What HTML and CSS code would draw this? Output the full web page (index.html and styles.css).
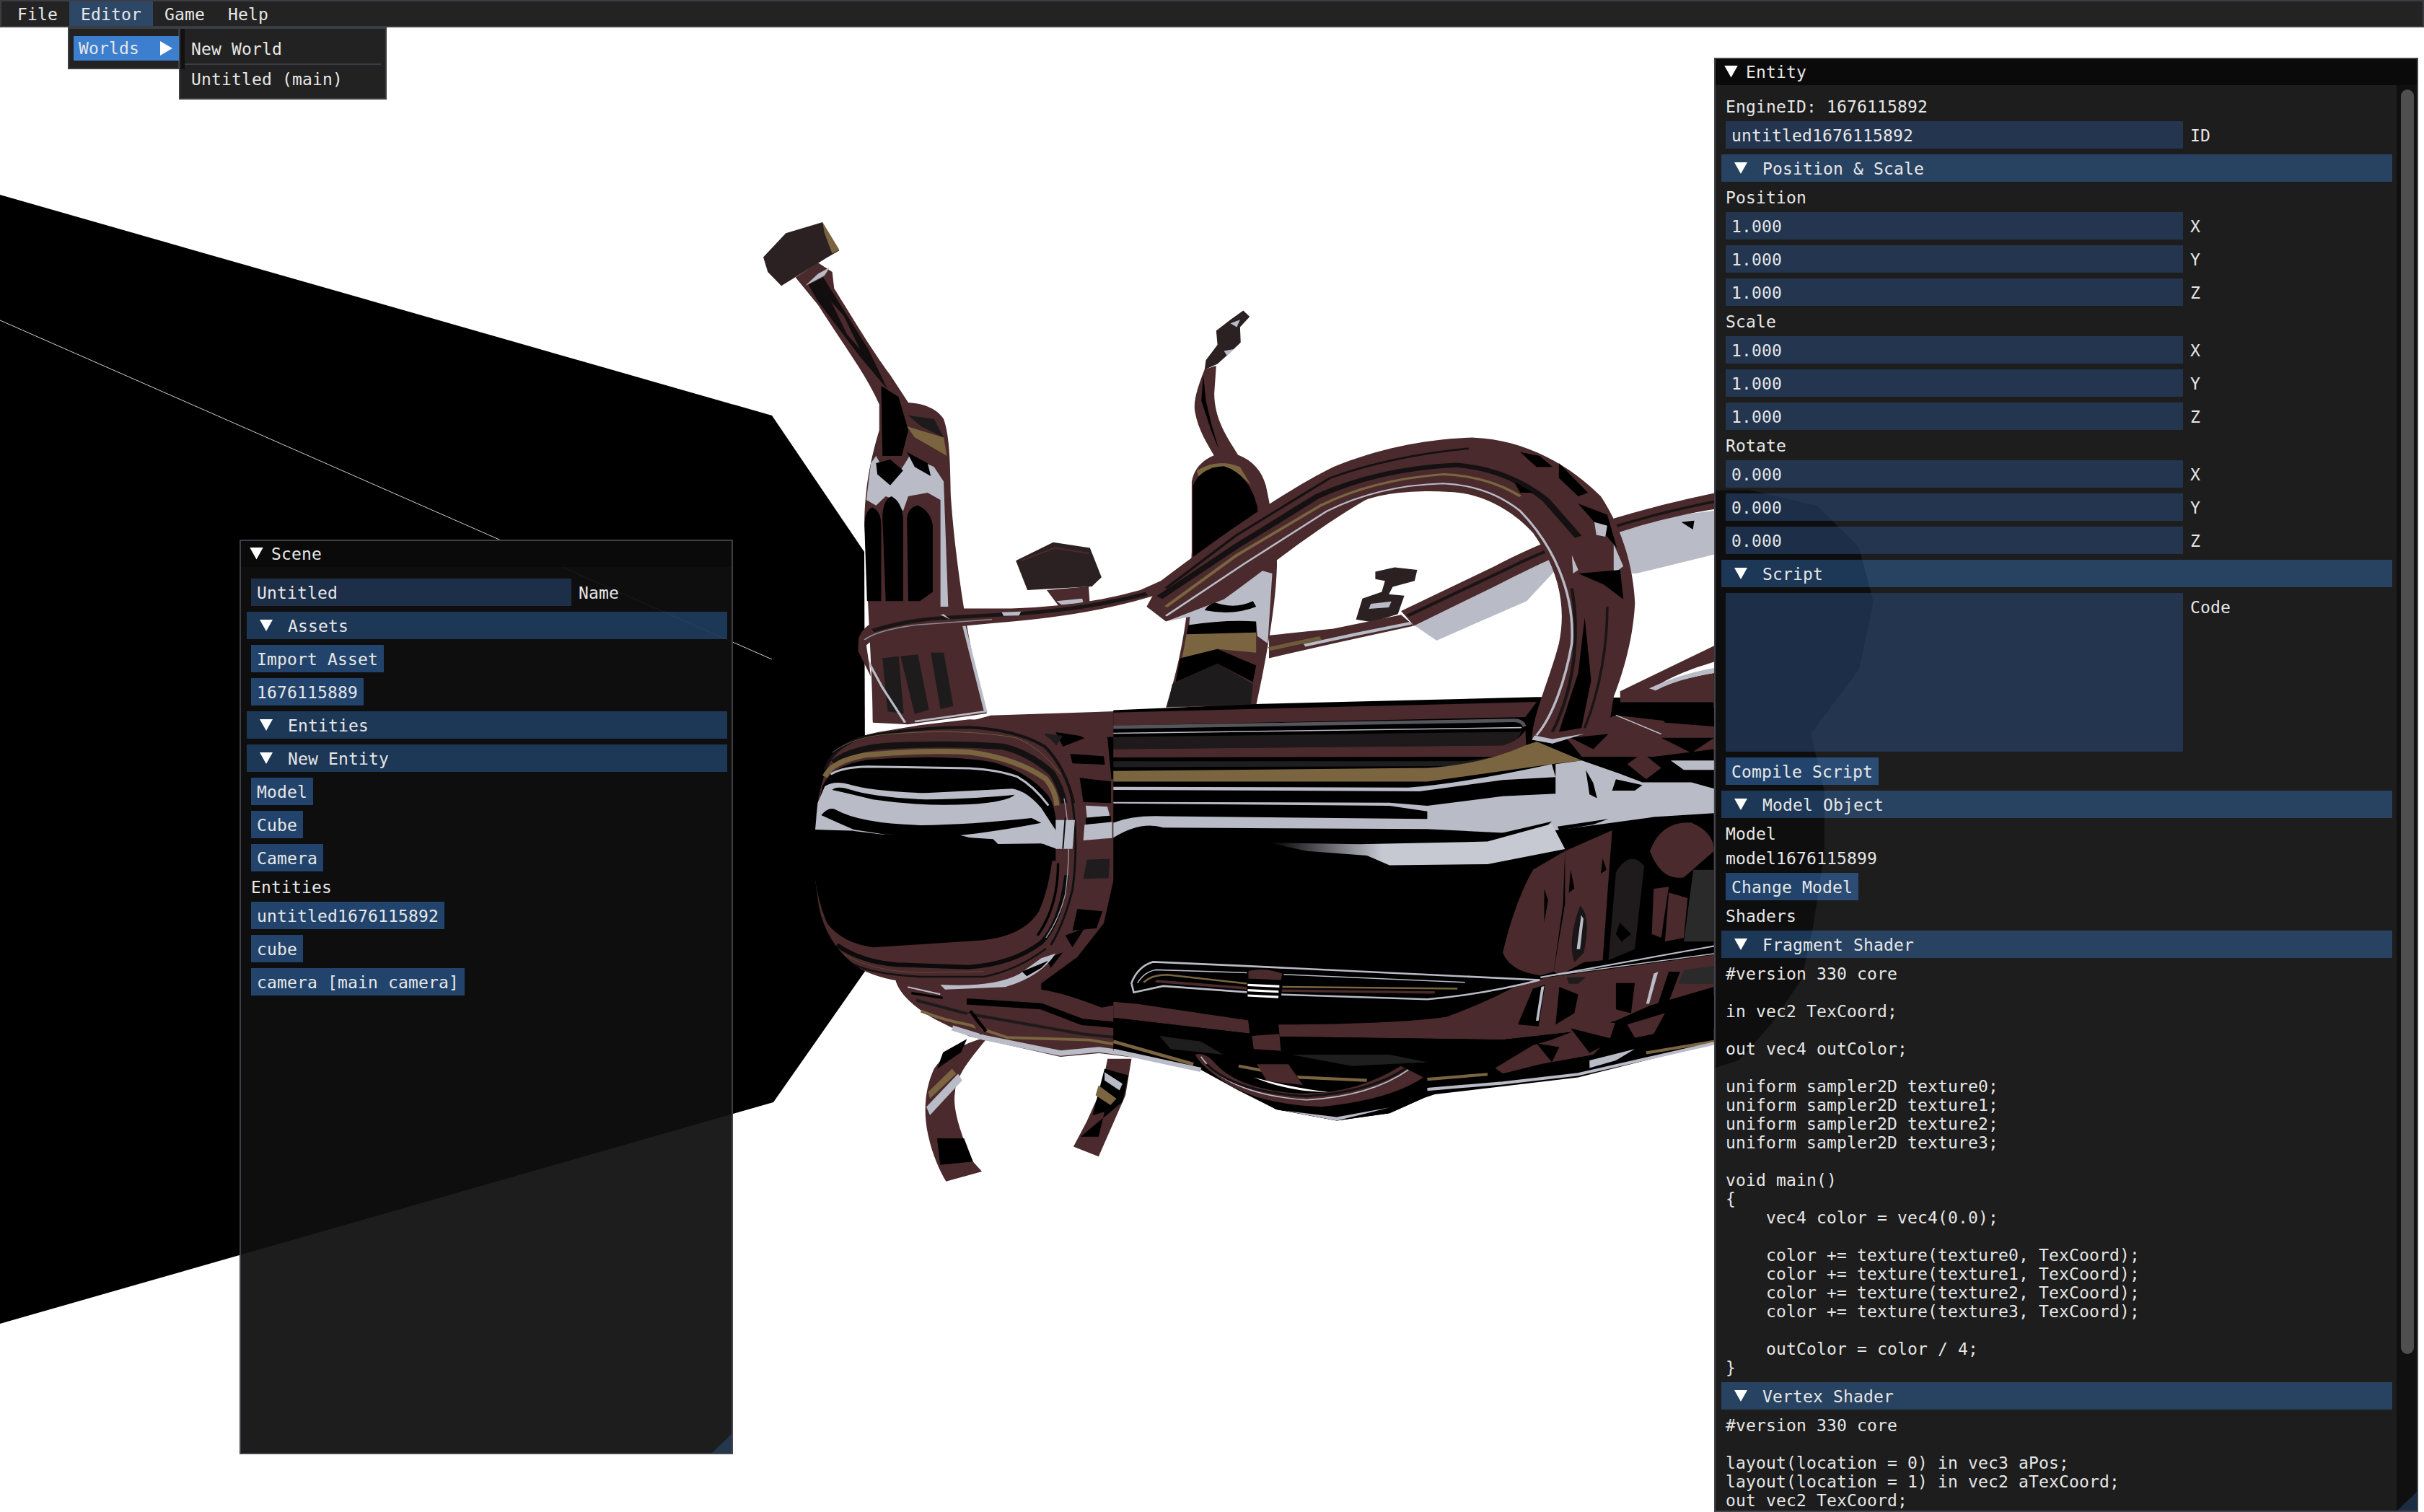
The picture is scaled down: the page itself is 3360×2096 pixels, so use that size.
FILE: index.html
```html
<!DOCTYPE html>
<html lang="en">
<head>
<meta charset="utf-8">
<title>Editor</title>
<link rel="stylesheet" href="styles.css">
</head>
<body>
<div class="viewport">
  <svg class="world" width="3360" height="2096" viewBox="0 0 3360 2096" xmlns="http://www.w3.org/2000/svg">
    <defs>
      <linearGradient id="fade-b" gradientUnits="userSpaceOnUse" x1="380" y1="0" x2="680" y2="0">
        <stop offset="0" stop-color="#b9bbc6" stop-opacity="0"/>
        <stop offset="1" stop-color="#c6c8d2"/>
      </linearGradient>
    </defs>
    <polygon fill="#000" points="0,270 1070,576 1198,765 1200,1345 1072,1528 0,1835"/>
    <line x1="0" y1="444" x2="1070" y2="914" stroke="#cfcfcf" stroke-width="1"/>

    <!-- arms and loose parts -->
    <g transform="translate(1000 280) scale(.893 .51)">
      <!-- left arm -->
      <path fill="#4a2a2c" d="M115,205 L150,165 L172,190 L175,235 C205,320 240,420 262,470 L290,545 Q330,550 345,590 C355,640 355,720 356,800 C362,950 380,1200 412,1390 L290,1420 L235,1415 C235,1300 228,1150 222,860 C224,750 235,680 245,620 L245,550 C225,470 190,390 150,280 Z"/>
      <path fill="#120d0e" d="M135,225 L158,205 L228,400 L258,510 L215,420 L150,270 Z"/>
      <path fill="#4a2a2c" d="M170,270 L190,310 L215,400 L195,360 Z"/>
      <path fill="#b9bbc6" d="M150,195 L168,178 L160,200 L130,228 Z"/>
      <path fill="#000" d="M248,500 L275,530 L290,620 L280,690 L250,690 Z"/>
      <path fill="#1c1a1a" d="M290,580 L330,590 L345,640 L310,610 Z"/>
      <path fill="#7a6540" d="M288,610 L345,640 L350,690 L300,640 Z"/>
      <path fill="#b9bbc6" d="M225,810 L232,710 L240,690 L248,715 L262,705 L278,730 L292,690 L330,720 L345,760 L352,1100 L340,1100 L340,810 L320,790 L290,800 L282,840 L270,810 L255,800 L240,825 Z"/>
      <path fill="#000" d="M222,880 Q222,840 234,830 Q248,840 248,880 L248,1085 L226,1085 Z"/>
      <path fill="#000" d="M250,860 Q250,810 264,800 Q280,815 282,860 L282,1085 L255,1085 Z"/>
      <path fill="#000" d="M288,860 Q290,830 305,825 Q325,840 328,880 L328,1060 L308,1085 L290,1085 Z"/>
      <path fill="#000" d="M240,710 L262,700 L282,730 L262,770 L242,740 Z"/>
      <path fill="#000" d="M288,680 L320,710 L325,745 L300,720 Z"/>
      <path fill="#1d1b1b" d="M250,1240 L275,1235 L283,1390 L258,1385 Z"/>
      <path fill="#1d1b1b" d="M278,1235 L305,1230 L322,1380 L300,1392 Z"/>
      <path fill="#1d1b1b" d="M325,1225 L345,1225 L360,1370 L340,1378 Z"/>
      <path fill="none" stroke="#b9bbc6" stroke-width="5" d="M372,1120 L410,1385 L300,1412"/>
      <path fill="none" stroke="#b9bbc6" stroke-width="4" d="M225,1240 L250,1320 L285,1415"/>

      <!-- hammer head -->
      <path fill="#2b2022" d="M65,150 L100,85 L157,55 L168,120 L183,132 L165,150 L93,228 L72,190 Z"/>
      <path fill="#7a6540" d="M157,55 L183,130 L172,140 L160,85 Z"/>

      <!-- centre arm -->
      <path fill="#2b2022" d="M810,295 L820,312 L805,340 L806,382 L788,412 L770,440 L750,456 L752,430 L770,388 L768,350 L790,320 Z"/>
      <path fill="#b9bbc6" d="M790,330 L805,320 L800,340 Z M780,405 L795,400 L785,418 Z"/>
      <path fill="#4a2a2c" d="M750,455 C740,500 732,540 735,570 C740,620 755,660 765,690 L803,690 C785,640 765,590 765,520 L768,445 Z"/>
      <path fill="#000" d="M748,470 L745,540 L760,620 L772,672 L760,600 L752,540 Z"/>
      <path fill="#4a2a2c" d="M765,688 L803,688 Q835,710 845,770 C855,850 864,950 862,1000 C860,1100 845,1250 830,1368 L690,1374 C710,1260 725,1150 730,950 L730,760 Q735,710 765,688 Z"/>
      <path fill="#7a6540" d="M738,730 Q770,695 805,720 L822,770 Q790,710 740,745 Z"/>
      <path fill="#000" d="M732,770 Q745,720 780,718 Q820,740 832,830 L835,1000 L732,1000 Z"/>
      <path fill="#b9bbc6" d="M735,1000 L835,1000 L855,1010 L848,1200 L832,1180 L830,1145 L760,1150 L725,1165 Z"/>
      <path fill="#000" d="M760,1085 Q795,1110 825,1085 L830,1100 Q795,1125 750,1110 Z M725,1150 Q780,1135 830,1140 L830,1170 L770,1175 L722,1175 Z"/>
      <path fill="#7a6540" d="M722,1175 L830,1170 L830,1225 L770,1215 L715,1240 Z"/>
      <path fill="#000" d="M712,1240 L770,1215 L830,1260 L825,1305 L770,1255 L705,1305 Z"/>
      <path fill="#1d1b1b" d="M700,1310 L770,1255 L825,1310 L822,1365 L692,1372 Z"/>

      <!-- small block -->
      <path fill="#4a2a2c" d="M505,1055 L570,1045 L572,1098 L525,1102 Z"/>
      <path fill="#b9bbc6" d="M520,1085 L560,1078 L562,1090 L528,1095 Z"/>
      <path fill="#2b2022" d="M457,975 L515,925 L572,940 L590,1020 L575,1045 L475,1055 Z"/>
      <path fill="none" stroke="#4a2a2c" stroke-width="4" d="M465,975 L518,940 L570,955"/>

      <!-- small I piece -->
      <path fill="#2b2022" d="M1015,1005 L1045,993 L1080,1000 L1076,1030 L1042,1046 L1036,1066 L1060,1070 L1050,1120 L1010,1142 L985,1135 L995,1078 L1025,1060 L1030,1030 L1015,1025 Z"/>
      <path fill="#b9bbc6" d="M1008,1092 L1040,1086 L1036,1102 L1005,1106 Z"/>
    </g>

    <!-- legs -->
    <g transform="translate(1100 940) scale(.829 .459)">
      <path fill="#4a2a2c" d="M325,1085 C280,1100 245,1150 235,1180 C222,1230 215,1300 225,1380 C232,1440 245,1490 255,1520 L315,1490 L300,1460 C280,1380 265,1300 270,1250 C272,1210 285,1170 325,1085 Z"/>
      <path fill="#000" d="M240,1390 L285,1390 L300,1460 L245,1470 Z M250,1130 L290,1090 L280,1130 L240,1180 Z"/>
      <path fill="#b9bbc6" d="M222,1295 L275,1195 L282,1215 L228,1320 Z"/>
      <path fill="#7a6540" d="M225,1250 L265,1180 L272,1195 L228,1270 Z"/>
      <path fill="#4a2a2c" d="M525,1150 L565,1150 L555,1260 L510,1445 L468,1415 L490,1340 L515,1240 Z"/>
      <path fill="#000" d="M520,1180 L560,1200 L550,1280 L510,1340 L480,1385 L510,1385 L520,1310 L500,1320 Z"/>
      <path fill="#b9bbc6" d="M520,1190 L550,1225 L545,1245 L520,1215 Z"/>
      <path fill="#7a6540" d="M510,1230 L540,1270 L530,1290 L505,1260 Z"/>
    </g>

    <!-- nacelle -->
    <g transform="translate(1110 980) scale(.3333)">
      <!-- hull behind -->
      <path fill="#4a2a2c" d="M395,1140 Q420,1220 560,1300 L700,1370 L1080,1455 L1240,1440 L1560,1480 L1560,10 L790,35 L700,60 Z"/>
      <path fill="#000" d="M1000,1150 L1300,700 L1560,650 L1560,1250 L1360,1230 L1250,1250 Q1100,1190 1000,1175 Z"/>
      <path fill="none" stroke="#000" stroke-width="26" d="M690,1225 L1000,1245 L1170,1310 L1560,1345"/>
      <path fill="none" stroke="#1e1a1b" stroke-width="12" d="M480,1220 L690,1275 L1170,1360 L1560,1400"/>
      <path fill="none" stroke="#b9bbc6" stroke-width="22" d="M630,1335 L760,1375 L1080,1440 L1240,1425 L1560,1470"/>
      <path fill="none" stroke="#7a6540" stroke-width="12" d="M500,1265 Q600,1305 700,1322 L860,1375 L1200,1385 L1560,1445"/>
      <path fill="none" stroke="#000" stroke-width="10" d="M460,1190 L590,1210"/>
      <path fill="none" stroke="#b9bbc6" stroke-width="6" d="M445,1165 L580,1195"/>
      <path fill="none" stroke="#000" stroke-width="14" d="M705,1265 L770,1350"/>
      <path fill="none" stroke="#4a2a2c" stroke-width="16" d="M695,1275 L755,1360"/>

      <!-- outer collar -->
      <path fill="#4a2a2c" d="M1030,95 L1200,80 L1290,125 L1305,700 L1260,900 L1150,1040 L1000,1150 Z"/>
      <path fill="#000" d="M1120,195 L1260,205 L1265,240 L1130,235 Z M1160,295 L1290,310 L1290,400 L1175,395 Z M1060,105 L1160,120 L1180,130 L1090,165 Z"/>
      <path fill="#1f1c1d" d="M1015,110 L1090,120 L1060,165 L1020,135 Z"/>
      <path fill="#b9bbc6" d="M1185,410 L1275,415 L1285,452 L1190,460 Z"/>
      <path fill="#000" d="M1185,462 L1290,452 L1290,480 L1185,490 Z"/>
      <path fill="#b9bbc6" d="M1180,490 L1295,478 L1295,545 L1175,555 Z"/>
      <path fill="#1f1c1d" d="M1190,635 L1285,632 L1280,712 L1175,715 Z"/>
      <path fill="#000" d="M1150,840 L1255,850 L1230,920 L1130,930 Z M1100,950 L1180,920 L1130,1000 Z M1020,1050 L1090,1020 L1040,1085 Z"/>
      <path fill="#000" d="M1275,125 L1300,125 L1310,300 L1292,300 Z"/>

      <!-- nacelle ring -->
      <path fill="#4a2a2c" d="M60,500 Q70,320 130,210 Q190,130 320,105 L500,75 L700,52 Q900,55 1020,120 Q1090,170 1140,300 Q1180,500 1160,700 Q1130,920 1010,1040 Q920,1130 760,1160 L500,1150 Q340,1140 250,1090 Q110,1000 75,830 L60,720 Z"/>
      <path fill="none" stroke="#141112" stroke-width="12" d="M100,260 Q150,135 320,115 Q500,85 700,85 Q900,95 1015,165 Q1100,250 1135,400"/>
      <path fill="none" stroke="#141112" stroke-width="26" d="M135,232 Q220,165 400,160 Q650,150 840,165 Q950,190 1045,275 Q1085,340 1095,400"/>
      <path fill="none" stroke="#6a5a3e" stroke-width="3" d="M130,190 Q220,120 400,110 Q700,90 900,130 Q1000,170 1080,280"/>
      <path fill="#000" d="M90,330 Q130,240 280,220 Q600,195 800,230 Q950,270 1030,370 Q1075,440 1060,600 L60,570 L60,480 Z"/>
      <path fill="none" stroke="#7a6540" stroke-width="22" d="M100,290 Q130,225 270,200 Q500,178 700,188 Q900,215 1020,300 Q1060,350 1065,410"/>
      <path fill="none" stroke="#b9bbc6" stroke-width="9" d="M125,280 Q170,250 280,248 L700,255 Q820,262 900,290 Q970,330 1030,410"/>

      <path fill="#b9bbc6" d="M60,510 L70,400 L100,330 Q140,305 200,322 Q300,352 520,358 L880,340 Q940,350 1000,420 L1065,520 L1065,590 L1000,568 L820,570 L800,550 L650,540 L340,545 L220,530 L220,515 Z"/>
      <path fill="#000" d="M130,345 Q150,325 210,345 Q300,375 520,385 Q750,380 890,365 Q860,395 700,405 Q500,415 300,385 Q200,360 130,345 Z"/>
      <path fill="#000" d="M85,450 Q120,410 150,430 Q250,485 500,492 Q700,490 960,462 L1000,482 Q800,520 650,535 L350,530 L220,510 Q150,480 85,450 Z"/>
      <path fill="#000" d="M340,530 L650,530 L810,570 L1010,570 L1060,600 L1060,640 L60,640 L60,515 L215,515 Z"/>

      <!-- black window -->
      <path fill="#000" d="M60,560 L1020,575 L1050,600 Q1035,750 990,850 Q930,950 760,970 L300,1000 Q170,980 110,900 Q75,820 60,720 Z"/>

      <!-- lower rim -->
      <path fill="none" stroke="#0c0a0a" stroke-width="18" d="M150,990 Q250,1060 400,1072 L700,1082 Q880,1070 1000,980 Q1080,900 1105,700"/>
      <path fill="none" stroke="#141112" stroke-width="8" d="M220,1070 Q300,1112 500,1122 L760,1122 Q900,1095 1020,1005"/>
      <path fill="none" stroke="#6a5a3e" stroke-width="2" d="M180,1030 Q300,1100 500,1105 L760,1100"/>
      <path fill="none" stroke="#000" stroke-width="10" d="M1070,650 Q1070,830 985,950"/>
      <path fill="none" stroke="#9a9aa4" stroke-width="4" d="M1095,380 Q1130,560 1100,780 Q1075,880 1020,960"/>
      <path fill="none" stroke="#111" stroke-width="9" d="M1120,340 Q1160,540 1130,760 Q1095,900 1040,990"/>
      <path fill="#b9bbc6" d="M1060,470 L1140,470 L1130,590 L1060,590 Z"/>
      <path fill="none" stroke="#111" stroke-width="6" d="M1100,460 L1090,590"/>
      <path fill="#b9bbc6" d="M580,1155 Q800,1168 910,1110 L1000,1045 L1060,1025 Q1000,1120 850,1165 L600,1175 Z"/>
      <path fill="#000" d="M920,1100 L1030,1055 L1000,1085 L940,1120 Z"/>
    </g>

    <!-- hull side -->
    <g transform="translate(1560 960) scale(.523)">
      <path fill="#000" d="M-32,47 L360,30 L1090,12 L1560,15 L1560,930 L1200,1020 L820,1065 L790,1075 L700,1115 L560,1135 L400,1105 L300,1055 L200,1000 L-32,955 Z"/>
      <!-- upper stripes -->
      <path fill="#4a2a2c" d="M-32,53 L1090,25 L1060,65 L-32,88 Z"/>
      <path fill="none" stroke="#55555d" stroke-width="9" d="M-32,92 L1030,74 Q1052,74 1058,90"/>
      <path fill="none" stroke="#b9bbc6" stroke-width="3" d="M-32,108 L1050,93"/>
      <path fill="#1e1a1b" d="M-32,118 L1050,104 Q1040,130 1000,140 L-32,150 Z"/>
      <path fill="#4a2a2c" d="M-32,150 L1000,140 Q1040,130 1060,100 L1062,140 L1000,170 L-32,172 Z"/>
      <path fill="#1e1e1e" d="M-32,182 L900,182 L1000,168 L900,195 L-32,198 Z"/>
      <path fill="#7a6540" d="M-32,208 L800,200 Q950,190 1060,140 L1090,130 L1210,180 L1130,190 L800,236 L-32,236 Z"/>

      <!-- big reflection -->
      <path fill="#b9bbc6" d="M-32,250 L750,252 Q900,240 1130,190 L1140,224 L1000,232 L780,262 L-32,258 Z"/>
      <path fill="#b9bbc6" d="M800,300 L1000,275 L1140,268 L1140,190 L1210,180 L1310,215 L1370,238 L1500,238 L1560,255 L1560,320 L1400,330 L1290,345 L1140,365 L1000,372 L800,362 L400,360 L100,358 Q40,340 -32,385 L-32,345 Q20,325 100,328 L800,335 L800,315 L700,300 L-32,294 L-32,290 L700,292 Z"/>
      <path fill="#000" d="M1220,205 L1240,240 L1250,280 L1230,270 Z M1300,230 L1370,245 L1350,260 L1290,260 Z M1145,355 L1280,335 L1240,350 L1150,365 Z"/>
      <path fill="#000" d="M1000,372 L1130,342 L1100,370 L960,402 L900,402 Z"/>
      <path fill="url(#fade-b)" d="M380,398 L620,402 L960,395 L1130,348 L1165,415 L960,455 L700,458 L640,432 L480,420 Z"/>

      <!-- right quarter -->
      <path fill="#4a2a2c" d="M1000,690 Q1030,560 1080,470 L1165,420 L1160,560 L1135,740 L1100,750 Q1020,740 1000,690 Z"/>
      <path fill="#4a2a2c" d="M1165,420 L1290,365 L1280,500 L1265,710 L1215,715 L1150,750 L1135,740 L1165,560 Z"/>
      <path fill="#000" d="M1110,520 L1120,550 L1110,610 Z M1180,470 L1190,520 L1175,530 Z M1265,440 L1275,470 L1260,480 Z"/>
      <path fill="#1a1618" d="M1205,565 Q1235,590 1215,690 L1190,715 Q1170,660 1205,565 Z"/>
      <path fill="#b9bbc6" d="M1208,590 L1214,600 L1205,680 L1196,680 Z"/>
      <path fill="#1f1a1b" d="M1300,475 Q1340,415 1375,460 L1350,680 L1280,710 Z"/>
      <path fill="#000" d="M1310,610 L1340,640 L1315,660 L1300,640 Z"/>
      <path fill="#4a2a2c" d="M1390,420 Q1420,340 1500,345 Q1560,370 1560,420 L1480,490 Q1420,500 1390,420 Z"/>
      <path fill="#4a2a2c" d="M1400,520 L1440,515 L1420,650 L1395,640 Z M1440,530 L1490,545 L1480,650 L1430,660 Z"/>
      <path fill="#2a2a2a" d="M1505,470 L1560,470 L1560,660 L1480,660 Z"/>

      <!-- rear top detail -->
      <path fill="#4a2a2c" d="M1160,110 L1300,60 L1560,90 L1560,150 L1400,170 L1210,170 Z"/>
      <path fill="#4a2a2c" d="M1330,190 L1370,160 L1420,200 L1380,230 Z"/>
      <path fill="#000" d="M1180,120 L1280,110 L1240,150 Z M1400,40 L1560,40 L1560,90 L1430,80 Z M1420,120 L1560,120 L1500,160 Z"/>
      <path fill="#b9bbc6" d="M1445,180 L1560,180 L1560,205 L1480,205 Z"/>
      <path fill="none" stroke="#b9bbc6" stroke-width="3" d="M1300,60 L1420,110"/>

      <!-- lower band -->
      <path fill="#4a2a2c" d="M-32,820 L30,825 L400,880 Q700,880 850,860 Q960,820 1050,770 L1120,755 L1560,695 L1560,780 L1390,830 L1300,870 L1180,900 L1000,920 L400,912 L-32,862 Z"/>
      <path fill="none" stroke="#b9bbc6" stroke-width="4" d="M1100,755 L1560,672"/>
      <path fill="none" stroke="#b9bbc6" stroke-width="3" d="M1130,750 L1560,692"/>
      <path fill="#000" d="M1040,880 L1080,785 L1112,775 L1095,885 Z M1140,880 L1190,850 L1200,800 L1150,780 Z M1300,770 L1350,770 L1340,850 L1300,840 Z M1440,740 L1470,740 L1440,820 L1410,830 Z"/>
      <path fill="#b9bbc6" d="M1102,780 L1110,778 L1095,870 L1088,870 Z M1400,745 L1412,740 L1388,825 L1380,825 Z"/>
      <path fill="#2a2a2a" d="M1480,735 L1560,725 L1560,772 L1465,772 Z"/>
      <path fill="#1f1c1d" d="M1170,755 L1220,755 L1200,772 L1175,772 Z"/>

      <!-- trim strip -->
      <path fill="#000" d="M20,795 L14,770 Q30,725 70,712 L300,722 L1100,762 Q950,800 800,815 L400,802 L100,778 Z"/>
      <path fill="none" stroke="#b9bbc6" stroke-width="5" d="M22,795 L16,770 Q32,727 72,714 L300,724 L1098,762 Q950,800 800,813 L400,800 L100,778 Z"/>
      <path fill="none" stroke="#b9bbc6" stroke-width="3" d="M32,770 Q50,740 80,735 L300,742 L900,768"/>
      <path fill="none" stroke="#7a6540" stroke-width="5" d="M48,768 Q70,748 110,748 L400,780 L880,785"/>
      <path fill="none" stroke="#4a2a2c" stroke-width="7" d="M80,765 L400,790 L820,795"/>

      <!-- lower hull -->
      <path fill="#000" d="M-32,862 L400,912 L1000,920 L1180,900 L1000,1000 L800,1040 L400,1000 L200,940 Z"/>
      <path fill="#1e1e1e" d="M90,910 L200,925 L260,960 L120,945 Z M440,960 L700,960 L800,980 L600,990 Z"/>
      <path fill="#4a2a2c" d="M980,995 L1080,935 L1130,920 L1260,870 L1320,880 L1240,960 L1100,985 L1000,1010 Z"/>
      <path fill="#000" d="M1090,930 L1150,940 L1130,980 Z M1180,890 L1300,920 L1230,955 Z M1300,870 L1560,800 L1560,890 L1370,945 L1280,930 Z"/>
      <path fill="#4a2a2c" d="M1330,880 L1430,850 L1400,905 L1350,915 Z"/>
      <path fill="#b9bbc6" d="M1230,975 L1350,945 L1300,975 L1230,995 Z"/>
      <path fill="none" stroke="#7a6540" stroke-width="9" d="M-32,925 L180,985"/>
      <path fill="none" stroke="#b9bbc6" stroke-width="12" d="M-32,950 L200,1000"/>
      <path fill="none" stroke="#7a6540" stroke-width="8" d="M300,990 L460,1020 L640,1028 M800,1025 L960,1012 M1380,955 L1560,925"/>
      <path fill="none" stroke="#b9bbc6" stroke-width="8" d="M800,1052 L1000,1035 L1200,1012 L1560,930"/>

      <!-- strap -->
      <path fill="#000" d="M322,738 Q370,728 420,745 L405,870 L412,950 L470,1040 L375,1030 L335,950 L322,840 Z"/>
      <path fill="#4a2a2c" d="M326,738 Q370,728 416,745 L412,762 L326,758 Z"/>
      <path fill="#4a2a2c" d="M335,910 L408,905 L412,950 L340,945 Z M348,985 L432,985 L470,1040 L375,1030 Z"/>
      <path fill="#fff" d="M324,772 L408,776 L408,782 L324,778 Z M324,786 L406,790 L406,796 L324,792 Z M324,800 L406,804 L405,810 L324,806 Z"/>

      <!-- handle -->
      <path fill="#fff" d="M340,1020 Q450,1050 560,1062 L470,1055 Q400,1045 340,1020 Z"/>
      <path fill="#000" d="M280,1040 Q400,1100 560,1100 L700,1080 L800,1050 L790,1075 L700,1115 L560,1135 L400,1105 Z"/>
      <path fill="#4a2a2c" d="M185,960 Q210,950 240,985 Q300,1050 450,1062 Q600,1070 730,990 L790,1020 Q700,1080 520,1098 Q350,1092 260,1030 Q200,990 185,960 Z"/>
      <path fill="none" stroke="#b9bbc6" stroke-width="3" d="M200,965 Q270,1065 480,1080 Q650,1070 750,1000"/>
      <path fill="none" stroke="#151011" stroke-width="6" d="M215,985 Q290,1060 480,1070 Q650,1060 745,995"/>
      <path fill="#b9bbc6" d="M420,1108 L560,1125 L700,1100 L640,1115 L560,1135 Z"/>
    </g>

    <!-- ribbon and arches, in front of the hull -->
    <g transform="translate(1000 280) scale(.893 .51)">
      <!-- far right arch -->
      <path fill="#b9bbc6" d="M1075,1150 L1110,1192 L1250,1085 L1295,1000 L1420,1010 L1560,950 L1560,835 L1400,870 L1290,960 L1200,1040 Z"/>
      <path fill="#4a2a2c" d="M1055,1112 L1200,990 C1280,915 1400,840 1560,785 L1560,830 C1400,870 1290,965 1200,1045 L1075,1152 Z"/>
      <path fill="none" stroke="#1a1415" stroke-width="7" d="M1065,1125 L1210,1005 C1290,935 1400,860 1560,808"/>
      <path fill="#4a2a2c" d="M850,1178 L950,1160 L1055,1122 L1075,1152 L950,1200 L850,1240 Z"/>
      <path fill="none" stroke="#b9bbc6" stroke-width="8" d="M905,1205 L985,1175 L1070,1145"/>
      <path fill="none" stroke="#6e5b3a" stroke-width="10" d="M850,1215 L930,1185"/>
      <path fill="#000" d="M1490,870 L1510,866 L1508,890 Z"/>
      <path fill="#4a2a2c" d="M1395,1330 L1560,1190 L1560,1360 L1395,1360 Z"/>
      <path fill="#fff" d="M1445,1325 C1480,1300 1520,1285 1560,1275 L1560,1240 C1510,1265 1470,1290 1445,1325 Z"/>
      <path fill="#b9bbc6" d="M1440,1322 C1480,1290 1520,1270 1560,1262 L1560,1275 C1520,1285 1480,1300 1450,1328 Z"/>

      <!-- ribbon -->
      <path fill="#4a2a2c" d="M213,1185 Q222,1145 250,1135 L350,1105 L450,1105 Q560,1100 650,1055 L682,1030 L690,1060 Q580,1125 420,1145 L300,1165 Q240,1175 225,1205 L232,1290 L212,1220 Z"/>
      <path fill="none" stroke="#1a1415" stroke-width="10" d="M235,1165 Q290,1135 350,1130 L470,1118 Q570,1105 660,1065"/>
      <path fill="#b9bbc6" d="M340,1122 L355,1135 L345,1120 Z M435,1115 L465,1113 L462,1124 L438,1125 Z"/>
      <path fill="none" stroke="#8a8a92" stroke-width="3" d="M222,1190 Q240,1165 300,1150 L420,1135"/>

      <!-- main arch -->
      <path fill="#b9bbc6" d="M1010,800 C950,860 860,960 770,1075 L690,1140 L735,1125 L800,1040 L850,960 L960,850 Z"/>
      <path fill="#4a2a2c" d="M660,1100 L682,1030 C780,900 880,780 950,720 C1020,670 1090,645 1165,640 C1250,645 1320,720 1365,800 C1395,880 1415,980 1418,1090 C1415,1200 1395,1300 1385,1345 L1380,1400 L1340,1445 L1290,1472 L1258,1462 C1258,1400 1285,1300 1300,1200 C1312,1100 1300,1000 1260,900 C1230,840 1180,790 1130,788 C1080,783 1030,790 1000,810 C930,880 850,990 780,1080 L690,1140 Z"/>
      <path fill="none" stroke="#7a6540" stroke-width="6" d="M690,1100 L800,960 L930,825 Q1010,755 1120,740 Q1190,745 1240,800"/>
      <path fill="none" stroke="#151011" stroke-width="12" d="M680,1075 L800,935 L925,800 Q1020,725 1140,715 Q1220,725 1280,810 L1330,910"/>
      <path fill="none" stroke="#151011" stroke-width="5" d="M690,1050 L800,905 L945,750 Q1040,690 1160,670"/>
      <path fill="none" stroke="#b9bbc6" stroke-width="4" d="M690,1125 L810,985 L940,840 Q1020,770 1120,765 Q1190,770 1240,840 C1290,930 1325,1060 1320,1200 C1310,1300 1290,1400 1265,1450"/>
      <path fill="#000" d="M1240,680 L1270,690 L1290,720 L1265,720 Z M1300,710 L1345,790 L1330,800 L1300,750 Z M1230,760 L1260,790 L1240,790 Z M1330,820 L1375,850 L1390,940 L1355,870 Z"/>
      <path fill="#b9bbc6" d="M1355,870 L1375,880 L1372,910 L1358,905 Z M1320,960 L1330,1000 L1322,1010 Z M1385,930 L1400,990 L1385,1010 Z"/>
      <path fill="#000" d="M1330,1010 L1395,1000 L1400,1080 L1370,1040 Z M1340,1130 L1350,1300 L1335,1430 L1300,1440 L1330,1280 Z"/>
      <path fill="none" stroke="#1a1415" stroke-width="5" d="M1320,1050 C1330,1150 1330,1300 1290,1440"/>
      <path fill="none" stroke="#1a1415" stroke-width="4" d="M1375,1100 C1375,1200 1365,1320 1340,1430"/>
      <path fill="#b9bbc6" d="M1258,1462 L1290,1472 L1340,1445 L1290,1460 L1262,1450 Z"/>
    </g>

    <!-- hull seen through the right panel -->
    <path fill="#000" d="M2378,680 L2424,679 L2519,701 L2577,759 L2596,831 L2595,844 L2577,928 L2510,1017 L2529,1097 L2529,1181 L2513,1286 L2497,1358 L2455,1420 L2410,1470 L2378,1480 Z"/>
  </svg>

  <nav class="menubar">
    <span class="menu-item">File</span>
    <span class="menu-item menu-item-open">Editor</span>
    <span class="menu-item">Game</span>
    <span class="menu-item">Help</span>
  </nav>

  <div class="popup popup-editor">
    <div class="popup-row"><span>Worlds</span><i class="arrow-right"></i></div>
  </div>
  <div class="popup popup-worlds">
    <i class="popup-overlap"></i>
    <span class="popup-text">New World</span>
    <i class="popup-sep"></i>
    <span class="popup-text">Untitled (main)</span>
  </div>

  <section class="window window-scene">
    <header class="title"><i class="arrow-down arrow-title"></i><span>Scene</span></header>
    <div class="window-main">
      <div class="content">
        <div class="field"><div class="input input-scene">Untitled</div><span class="field-label">Name</span></div>
        <div class="section"><i class="arrow-down"></i><span>Assets</span></div>
        <button class="btn">Import Asset</button>
        <button class="btn">1676115889</button>
        <div class="section"><i class="arrow-down"></i><span>Entities</span></div>
        <div class="section"><i class="arrow-down"></i><span>New Entity</span></div>
        <button class="btn">Model</button>
        <button class="btn">Cube</button>
        <button class="btn">Camera</button>
        <div class="text">Entities</div>
        <button class="btn">untitled1676115892</button>
        <button class="btn">cube</button>
        <button class="btn">camera [main camera]</button>
      </div>
    </div>
    <i class="grip"></i>
  </section>

  <section class="window window-entity">
    <header class="title"><i class="arrow-down arrow-title"></i><span>Entity</span></header>
    <div class="window-main">
      <div class="content">
        <div class="text">EngineID: 1676115892</div>
        <div class="field"><div class="input input-entity">untitled1676115892</div><span class="field-label">ID</span></div>
        <div class="section"><i class="arrow-down"></i><span>Position &amp; Scale</span></div>
        <div class="text">Position</div>
        <div class="field"><div class="input input-entity">1.000</div><span class="field-label">X</span></div>
        <div class="field"><div class="input input-entity">1.000</div><span class="field-label">Y</span></div>
        <div class="field"><div class="input input-entity">1.000</div><span class="field-label">Z</span></div>
        <div class="text">Scale</div>
        <div class="field"><div class="input input-entity">1.000</div><span class="field-label">X</span></div>
        <div class="field"><div class="input input-entity">1.000</div><span class="field-label">Y</span></div>
        <div class="field"><div class="input input-entity">1.000</div><span class="field-label">Z</span></div>
        <div class="text">Rotate</div>
        <div class="field"><div class="input input-entity">0.000</div><span class="field-label">X</span></div>
        <div class="field"><div class="input input-entity">0.000</div><span class="field-label">Y</span></div>
        <div class="field"><div class="input input-entity">0.000</div><span class="field-label">Z</span></div>
        <div class="section"><i class="arrow-down"></i><span>Script</span></div>
        <div class="field field-tall"><div class="input input-entity input-area"></div><span class="field-label">Code</span></div>
        <button class="btn">Compile Script</button>
        <div class="section"><i class="arrow-down"></i><span>Model Object</span></div>
        <div class="text">Model</div>
        <div class="text">model1676115899</div>
        <button class="btn">Change Model</button>
        <div class="text">Shaders</div>
        <div class="section"><i class="arrow-down"></i><span>Fragment Shader</span></div>
        <pre class="code">#version 330 core

in vec2 TexCoord;

out vec4 outColor;

uniform sampler2D texture0;
uniform sampler2D texture1;
uniform sampler2D texture2;
uniform sampler2D texture3;

void main()
{
    vec4 color = vec4(0.0);

    color += texture(texture0, TexCoord);
    color += texture(texture1, TexCoord);
    color += texture(texture2, TexCoord);
    color += texture(texture3, TexCoord);

    outColor = color / 4;
}</pre>
        <div class="section"><i class="arrow-down"></i><span>Vertex Shader</span></div>
        <pre class="code">#version 330 core

layout(location = 0) in vec3 aPos;
layout(location = 1) in vec2 aTexCoord;
out vec2 TexCoord;</pre>
      </div>
      <div class="scrollbar"><i class="scrollbar-grab"></i></div>
    </div>
    <i class="grip"></i>
  </section>
</div>
</body>
</html>
```

FILE: styles.css
```css
* { box-sizing: border-box; }

html, body { margin: 0; padding: 0; }

body {
  background: #fff;
  color: #e6e6e6;
  font-family: "DejaVu Sans Mono", "Liberation Mono", monospace;
  font-size: 23px;
  letter-spacing: 0.15px;
  line-height: 26px;
}

i { display: block; font-style: normal; }

.viewport {
  position: relative;
  width: 3360px;
  height: 2096px;
  overflow: hidden;
  background: #fff;
}

.world { position: absolute; inset: 0; display: block; }

/* menu bar */
.menubar {
  position: absolute;
  inset: 0 0 auto 0;
  height: 38px;
  display: flex;
  padding-left: 6px;
  background: #232323;
  border: 2px solid #3c3c45;
}

.menu-item {
  padding: 0 16px;
  line-height: 36px;
}

.menu-item-open { background: #2d4766; }

/* popups */
.popup {
  position: absolute;
  top: 38px;
  background: #222;
  border: 2px solid #3c3c45;
}

.popup-editor {
  left: 94px;
  width: 155px;
  height: 58px;
  padding: 10px 0 0 6px;
}

.popup-row {
  display: flex;
  align-items: center;
  justify-content: space-between;
  width: 146px;
  height: 34px;
  padding: 0 9px 0 7px;
  background: #3c7fcf;
}

.arrow-right {
  width: 17px;
  height: 20px;
  background: #fff;
  clip-path: polygon(0 0, 100% 50%, 0 100%);
}

.popup-worlds {
  left: 248px;
  width: 288px;
  height: 100px;
  display: flex;
  flex-direction: column;
  padding: 15px 6px 0;
  gap: 7px;
}

.popup-overlap {
  position: absolute;
  left: 0;
  top: 0;
  width: 6px;
  height: 56px;
  background: #111;
}

.popup-text { padding-left: 9px; }

.popup-sep { height: 2px; background: #3c3c45; }

/* windows */
.window {
  position: absolute;
  display: flex;
  flex-direction: column;
  background: rgba(15, 15, 15, 0.94);
  border: 2px solid rgba(110, 110, 128, 0.5);
  overflow: hidden;
}

.window-scene { left: 332px; top: 748px; width: 684px; height: 1268px; }
.window-entity { left: 2376px; top: 80px; width: 976px; height: 2016px; }

.title {
  flex: none;
  display: flex;
  align-items: center;
  height: 36px;
  gap: 11px;
  padding-left: 12px;
  background: #0a0a0a;
}

.window-main { flex: 1; display: flex; min-height: 0; }

.content {
  flex: 1;
  min-width: 0;
  display: flex;
  flex-direction: column;
  align-items: flex-start;
  gap: 8px;
  padding: 16px 6px 0 14px;
  overflow: hidden;
}

.arrow-down {
  flex: none;
  width: 18px;
  height: 16px;
  background: #fff;
  clip-path: polygon(0 0, 100% 0, 50% 100%);
}

.arrow-title { width: 19px; height: 17px; margin-top: -2px; }

.text { height: 26px; flex: none; padding-top: 1px; }

.field { display: flex; gap: 10px; flex: none; height: 38px; }
.field-tall { height: 220px; }

.field-label { height: 38px; padding-top: 7px; }

.input {
  height: 38px;
  padding: 7px 0 0 8px;
  background: rgba(41, 74, 122, 0.54);
}

.input-scene { width: 444px; }
.input-entity { width: 634px; }
.input-area { height: 220px; }

.section {
  flex: none;
  display: flex;
  align-items: center;
  align-self: stretch;
  gap: 21px;
  height: 38px;
  margin-left: -6px;
  padding-left: 18px;
  background: rgba(66, 150, 250, 0.31);
}

.section span { padding-top: 2px; }

.btn {
  flex: none;
  height: 38px;
  padding: 2px 8px 0;
  border: 0;
  border-radius: 0;
  color: inherit;
  font: inherit;
  letter-spacing: inherit;
  background: rgba(66, 150, 250, 0.4);
}

.code {
  flex: none;
  margin: 0 0 -1px;
  padding-top: 1px;
  font: inherit;
  letter-spacing: inherit;
  line-height: 26px;
}

.scrollbar {
  flex: none;
  width: 28px;
  padding: 6px 4px 0 6px;
  background: rgba(5, 5, 5, 0.53);
}

.scrollbar-grab {
  height: 1753px;
  border-radius: 9px;
  background: #4f4f4f;
}

.grip {
  position: absolute;
  right: 0;
  bottom: 0;
  width: 27px;
  height: 26px;
  background: rgba(66, 150, 250, 0.22);
  clip-path: polygon(100% 0, 100% 100%, 0 100%);
}
```
